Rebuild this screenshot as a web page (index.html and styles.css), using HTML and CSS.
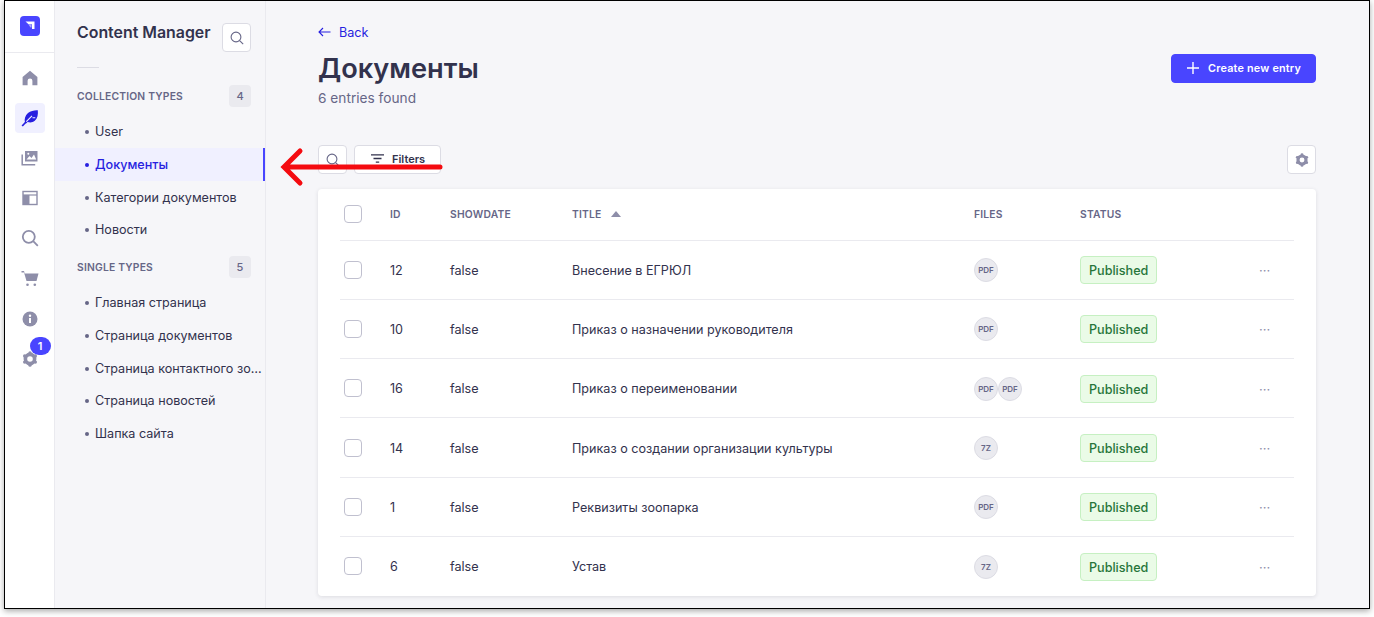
FILE: index.html
```html
<!DOCTYPE html>
<html lang="en">
<head>
  <meta charset="UTF-8" />
  <title>Документы</title>
  <link rel="stylesheet" href="styles.css">
</head>
<body>
  <div class="frame">

    <!-- Icon rail -->
    <nav class="rail">
      <div class="rail-top">
        <div class="logo">
          <svg width="12" height="12" viewBox="0 0 12 12"><path d="M1.500 1.500h9v7.500H8V4.200H4.500z" fill="#fff"/><path d="M4.500 4.500h3v3H6.500z" fill="#fff" opacity=".55"/></svg>
        </div>
      </div>
      <ul class="rail-icons">
        <li><svg width="16" height="16" viewBox="0 0 16 16"><path d="M8 .8 15.400 7v8.200H10.400v-4.400a2.400 2.400 0 0 0-4.800 0v4.400H.6V7z" fill="#8e8ea9"/></svg></li>
        <li class="active"><svg width="18" height="18" viewBox="0 0 18 18"><path d="M16.800 1.200c.5 4-.3 8.200-3 10.500-2.300 2-5 2-7.200 1.200L5 14.500l-1-1c-1-3.500.2-7 3-9.500 2.800-2.300 6.500-3 9.800-2.800z" fill="#271fe0"/><path d="M1.200 17 5 13" stroke="#271fe0" stroke-width="1.800"/><path d="M5.300 12.700 11 6.800M11.500 8.700h2.800" stroke="#f0f0ff" stroke-width="1.100"/></svg></li>
        <li><svg width="17" height="16" viewBox="0 0 17 16"><path d="M4 1h12.500v10.500H4z" fill="#8e8ea9"/><path d="M5.500 9.500 8.500 6l2 2 2.500-3.500 2.200 5z" fill="#fff"/><circle cx="7.300" cy="3.800" r="1" fill="#fff"/><path d="M1.200 4.500v10.300h13" fill="none" stroke="#8e8ea9" stroke-width="1.500"/></svg></li>
        <li><svg width="16" height="16" viewBox="0 0 16 16"><rect x="1" y="1.500" width="14" height="13" fill="#fff" stroke="#8e8ea9" stroke-width="1.400"/><path d="M1 5h14" stroke="#8e8ea9" stroke-width="1.200"/><path d="M1 5h6.500v9.500H1z" fill="#8e8ea9"/></svg></li>
        <li><svg width="18" height="18" viewBox="0 0 18 18"><circle cx="7.800" cy="7.800" r="6" fill="none" stroke="#8e8ea9" stroke-width="1.800"/><path d="m12.200 12.200 4.600 4.600" stroke="#8e8ea9" stroke-width="1.800"/></svg></li>
        <li><svg width="18" height="17" viewBox="0 0 18 17"><path d="M.5 1H3l.7 2.500H17.500l-2 7.500H5.500L3 2.400H.5z" fill="#8e8ea9"/><circle cx="6.500" cy="14.800" r="1.300" fill="#8e8ea9"/><circle cx="13.800" cy="14.800" r="1.300" fill="#8e8ea9"/></svg></li>
        <li><svg width="16" height="16" viewBox="0 0 16 16"><circle cx="8" cy="8" r="7.500" fill="#8e8ea9"/><path d="M7 7h2v5H7z" fill="#fff"/><circle cx="8" cy="4.700" r="1.200" fill="#fff"/></svg></li>
        <li class="has-badge">
          <svg width="16" height="16" viewBox="0 0 16 16"><circle cx="8" cy="8" r="4.600" fill="none" stroke="#8e8ea9" stroke-width="3.600"/><circle cx="8" cy="1.800" r="1.600" fill="#8e8ea9"/><circle cx="8" cy="14.200" r="1.600" fill="#8e8ea9"/><circle cx="2.600" cy="4.900" r="1.600" fill="#8e8ea9"/><circle cx="13.400" cy="4.900" r="1.600" fill="#8e8ea9"/><circle cx="2.600" cy="11.100" r="1.600" fill="#8e8ea9"/><circle cx="13.400" cy="11.100" r="1.600" fill="#8e8ea9"/></svg>
          <span class="rail-badge">1</span>
        </li>
      </ul>
    </nav>

    <!-- Content manager side menu -->
    <aside class="side">
      <div class="side-head">
        <h2>Content Manager</h2>
        <button class="icon-btn">
          <svg width="14" height="14" viewBox="0 0 14 14"><circle cx="6" cy="6" r="4.900" fill="none" stroke="#666687" stroke-width="1.100"/><path d="m9.600 9.600 3.600 3.600" stroke="#666687" stroke-width="1.100"/></svg>
        </button>
      </div>
      <div class="side-rule"></div>

      <div class="group-head first">
        <span>COLLECTION TYPES</span>
        <span class="count">4</span>
      </div>
      <ul class="links">
        <li>User</li>
        <li class="current">Документы</li>
        <li>Категории документов</li>
        <li>Новости</li>
      </ul>

      <div class="group-head">
        <span>SINGLE TYPES</span>
        <span class="count">5</span>
      </div>
      <ul class="links">
        <li>Главная страница</li>
        <li>Страница документов</li>
        <li>Страница контактного зоопарка</li>
        <li>Страница новостей</li>
        <li>Шапка сайта</li>
      </ul>
    </aside>

    <main class="main">
      <a class="back" href="#">
        <svg width="13" height="10" viewBox="0 0 13 10"><path d="M12.500 5H1M5 1 1 5l4 4" fill="none" stroke="#271fe0" stroke-width="1.100"/></svg>
        Back
      </a>

      <div class="title-row">
        <div>
          <h1>Документы</h1>
          <p class="found">6 entries found</p>
        </div>
        <button class="create">
          <svg width="12" height="12" viewBox="0 0 12 12"><path d="M6 0v12M0 6h12" stroke="#fff" stroke-width="1.400"/></svg>
          Create new entry
        </button>
      </div>

      <div class="tools">
        <button class="icon-btn">
          <svg width="14" height="14" viewBox="0 0 14 14"><circle cx="6" cy="6" r="4.900" fill="none" stroke="#666687" stroke-width="1.100"/><path d="m9.600 9.600 3.600 3.600" stroke="#666687" stroke-width="1.100"/></svg>
        </button>
        <button class="filters">
          <svg width="13" height="9" viewBox="0 0 13 9"><path d="M0 .8h13M2.500 4.500h8M4.800 8.200h3.400" stroke="#32324d" stroke-width="1.300"/></svg>
          Filters
        </button>
        <button class="icon-btn settings">
          <svg width="14" height="14" viewBox="0 0 16 16"><circle cx="8" cy="8" r="4.600" fill="none" stroke="#8e8ea9" stroke-width="3.600"/><circle cx="8" cy="1.800" r="1.600" fill="#8e8ea9"/><circle cx="8" cy="14.200" r="1.600" fill="#8e8ea9"/><circle cx="2.600" cy="4.900" r="1.600" fill="#8e8ea9"/><circle cx="13.400" cy="4.900" r="1.600" fill="#8e8ea9"/><circle cx="2.600" cy="11.100" r="1.600" fill="#8e8ea9"/><circle cx="13.400" cy="11.100" r="1.600" fill="#8e8ea9"/></svg>
        </button>
      </div>

      <div class="card">
        <table>
          <thead>
            <tr>
              <th class="c-check"><span class="box"></span></th>
              <th class="c-id">ID</th>
              <th class="c-date">SHOWDATE</th>
              <th class="c-title">TITLE <span class="sort"></span></th>
              <th class="c-files">FILES</th>
              <th class="c-status">STATUS</th>
              <th class="c-more"></th>
            </tr>
          </thead>
          <tbody>
            <tr>
              <td><span class="box"></span></td><td>12</td><td>false</td><td>Внесение в ЕГРЮЛ</td>
              <td><span class="file">PDF</span></td>
              <td><span class="pub">Published</span></td><td class="dots">···</td>
            </tr>
            <tr>
              <td><span class="box"></span></td><td>10</td><td>false</td><td>Приказ о назначении руководителя</td>
              <td><span class="file">PDF</span></td>
              <td><span class="pub">Published</span></td><td class="dots">···</td>
            </tr>
            <tr>
              <td><span class="box"></span></td><td>16</td><td>false</td><td>Приказ о переименовании</td>
              <td><span class="file">PDF</span><span class="file">PDF</span></td>
              <td><span class="pub">Published</span></td><td class="dots">···</td>
            </tr>
            <tr>
              <td><span class="box"></span></td><td>14</td><td>false</td><td>Приказ о создании организации культуры</td>
              <td><span class="file">7Z</span></td>
              <td><span class="pub">Published</span></td><td class="dots">···</td>
            </tr>
            <tr>
              <td><span class="box"></span></td><td>1</td><td>false</td><td>Реквизиты зоопарка</td>
              <td><span class="file">PDF</span></td>
              <td><span class="pub">Published</span></td><td class="dots">···</td>
            </tr>
            <tr>
              <td><span class="box"></span></td><td>6</td><td>false</td><td>Устав</td>
              <td><span class="file">7Z</span></td>
              <td><span class="pub">Published</span></td><td class="dots">···</td>
            </tr>
          </tbody>
        </table>
      </div>
    </main>

    <!-- Red arrow drawn over the screenshot -->
    <svg class="arrow" width="170" height="44" viewBox="0 0 170 44">
      <path d="M163 22H8M23 6 7 22l16 16" fill="none" stroke="#f40b10" stroke-width="5" stroke-linecap="round" stroke-linejoin="miter"/>
    </svg>
  </div>
</body>
</html>
```

FILE: styles.css
```css
* {
  box-sizing: border-box;
}
html, body {
  margin: 0;
  height: 617px;
  overflow: hidden;
  background: #fff;
}
body {
  font-family: Inter, "Liberation Sans", sans-serif;
  color: #32324d;
}
ul {
  list-style: none;
  margin: 0;
  padding: 0;
}
button {
  font-family: inherit;
  cursor: pointer;
}

.frame {
  position: relative;
  display: flex;
  width: 1366px;
  height: 609px;
  margin-left: 4px;
  border: 1.500px solid #000;
  border-top-width: 1px;
  background: #f6f6f9;
  overflow: hidden;
  box-shadow: 0 2px 6px rgba(0,0,0,0.35);
}

/* rail */
.rail {
  width: 50px;
  flex: none;
  background: #fff;
  border-right: 1px solid #eaeaef;
}
.rail-top {
  height: 52px;
  padding-bottom: 2px;
  display: flex;
  align-items: center;
  justify-content: center;
  border-bottom: 1px solid #eaeaef;
}
.logo {
  width: 20px;
  height: 20px;
  background: #4945ff;
  border-radius: 4px;
  display: flex;
  align-items: center;
  justify-content: center;
}
.rail-icons {
  display: flex;
  flex-direction: column;
  align-items: center;
  gap: 10.100px;
  padding-top: 10px;
}
.rail-icons li {
  position: relative;
  width: 30px;
  height: 30px;
  border-radius: 4px;
  display: flex;
  align-items: center;
  justify-content: center;
}
.rail-icons li.active {
  background: #f0f0ff;
}
.rail-badge {
  position: absolute;
  top: -7px;
  left: 15px;
  width: 21px;
  height: 18px;
  border-radius: 10px;
  background: #4945ff;
  color: #fff;
  font-size: 11px;
  font-weight: 600;
  line-height: 18px;
  text-align: center;
}

/* side menu */
.side {
  width: 211px;
  flex: none;
  border-right: 1.500px solid #eaeaef;
  padding-top: 22px;
  overflow: hidden;
}
.side-head {
  display: flex;
  justify-content: space-between;
  align-items: flex-start;
  padding: 0 14px 0 22px;
}
.side-head h2 {
  margin: 0;
  font-size: 15.900px;
  font-weight: 600;
  line-height: 20px;
  white-space: nowrap;
  color: #32324d;
}
.icon-btn {
  width: 29px;
  height: 29px;
  padding: 0;
  background: #fff;
  border: 1px solid #dcdce4;
  border-radius: 4px;
  display: flex;
  align-items: center;
  justify-content: center;
}
.side-rule {
  width: 22px;
  height: 1px;
  margin: 15px 0 0 22px;
  background: #dcdce4;
}
.group-head {
  display: flex;
  justify-content: space-between;
  align-items: center;
  padding: 0 14px 0 22px;
  margin-top: 10px;
  font-size: 10.300px;
  font-weight: 600;
  letter-spacing: 0.2px;
  color: #666687;
}
.group-head.first {
  margin-top: 17px;
}
.count {
  width: 22px;
  height: 22px;
  border-radius: 4px;
  background: #eaeaef;
  font-size: 11px;
  font-weight: 500;
  line-height: 22px;
  text-align: center;
  letter-spacing: 0;
}
.links {
  margin-top: 8px;
}
.links li {
  position: relative;
  height: 32.750px;
  line-height: 34.500px;
  padding-left: 40px;
  padding-right: 3px;
  font-size: 12.600px;
  color: #32324d;
  white-space: nowrap;
  overflow: hidden;
  text-overflow: ellipsis;
}
.links li::before {
  content: "";
  position: absolute;
  left: 29.500px;
  top: 15px;
  width: 4px;
  height: 4px;
  border-radius: 50%;
  background: #666687;
}
.links li.current {
  background: #f0f0ff;
  color: #271fe0;
  font-weight: 500;
  border-right: 2px solid #4945ff;
}
.links li.current::before {
  background: #271fe0;
}

/* main area */
.main {
  flex: 1;
  min-width: 0;
  padding: 23px 53px 0 52px;
}
.back {
  display: flex;
  align-items: center;
  gap: 8px;
  height: 16px;
  font-size: 12.600px;
  color: #271fe0;
  text-decoration: none;
}
.title-row {
  display: flex;
  justify-content: space-between;
  align-items: flex-start;
  margin-top: 12px;
}
h1 {
  margin: 0;
  font-size: 27.200px;
  font-weight: 600;
  line-height: 34px;
  color: #32324d;
}
.found {
  margin: 2px 0 0;
  font-size: 13.700px;
  line-height: 20px;
  color: #666687;
}
.create {
  display: flex;
  align-items: center;
  gap: 9px;
  height: 29px;
  margin-top: 1.500px;
  padding: 0 14px 0 15px;
  background: #4945ff;
  border: 1px solid #4945ff;
  border-radius: 4px;
  color: #fff;
  font-size: 10.800px;
  font-weight: 600;
  letter-spacing: 0.2px;
}
.tools {
  display: flex;
  align-items: center;
  gap: 7px;
  margin-top: 37px;
}
.filters {
  display: flex;
  align-items: center;
  gap: 8px;
  height: 29px;
  width: 87px;
  padding: 0 0 2px 16px;
  background: #fff;
  border: 1px solid #dcdce4;
  border-radius: 4px;
  font-size: 11px;
  font-weight: 600;
  color: #32324d;
}
.settings {
  margin-left: auto;
}

/* table */
.card {
  margin-top: 15px;
  height: 407px;
  padding: 0 22px;
  background: #fff;
  border-radius: 4px;
  box-shadow: 0 1px 4px rgba(33,33,52,0.12);
}
table {
  width: 100%;
  border-collapse: collapse;
  table-layout: fixed;
  font-size: 12.600px;
}
th {
  height: 51px;
  padding: 0;
  text-align: left;
  font-size: 10.300px;
  font-weight: 600;
  letter-spacing: 0.2px;
  color: #666687;
  border-bottom: 1px solid #eaeaef;
}
td {
  height: 59.300px;
  padding: 1px 0 0;
  border-bottom: 1px solid #eaeaef;
  color: #32324d;
}
tbody tr:last-child td {
  border-bottom: none;
}
.c-check { width: 50px; padding-left: 4px; }
.c-id { width: 60px; }
.c-date { width: 122px; }
.c-title { width: 402px; }
.c-files { width: 106px; }
.c-status { width: 172px; }
td:first-child {
  padding-left: 4px;
}
.box {
  display: block;
  width: 18px;
  height: 18px;
  background: #fff;
  border: 1px solid #c0c0cf;
  border-radius: 4px;
}
td .box {
  margin-top: -1px;
}
.sort {
  display: inline-block;
  margin-left: 7px;
  vertical-align: 1px;
  border-left: 5px solid transparent;
  border-right: 5px solid transparent;
  border-bottom: 6px solid #8e8ea9;
}
.file {
  display: inline-block;
  width: 24px;
  height: 24px;
  vertical-align: middle;
  border-radius: 50%;
  background: #eaeaef;
  border: 1px solid #dcdce4;
  font-size: 8px;
  font-weight: 600;
  line-height: 22px;
  text-align: center;
  color: #666687;
}
.pub {
  display: inline-block;
  height: 28px;
  padding: 0 8px;
  line-height: 27px;
  background: #eafbe7;
  border: 1px solid #c6f0c2;
  border-radius: 4px;
  font-size: 12.600px;
  font-weight: 500;
  color: #27753a;
}
.dots {
  padding-left: 7px;
  color: #8e8ea9;
  font-size: 13px;
}

.arrow {
  position: absolute;
  left: 272px;
  top: 144px;
}
```
